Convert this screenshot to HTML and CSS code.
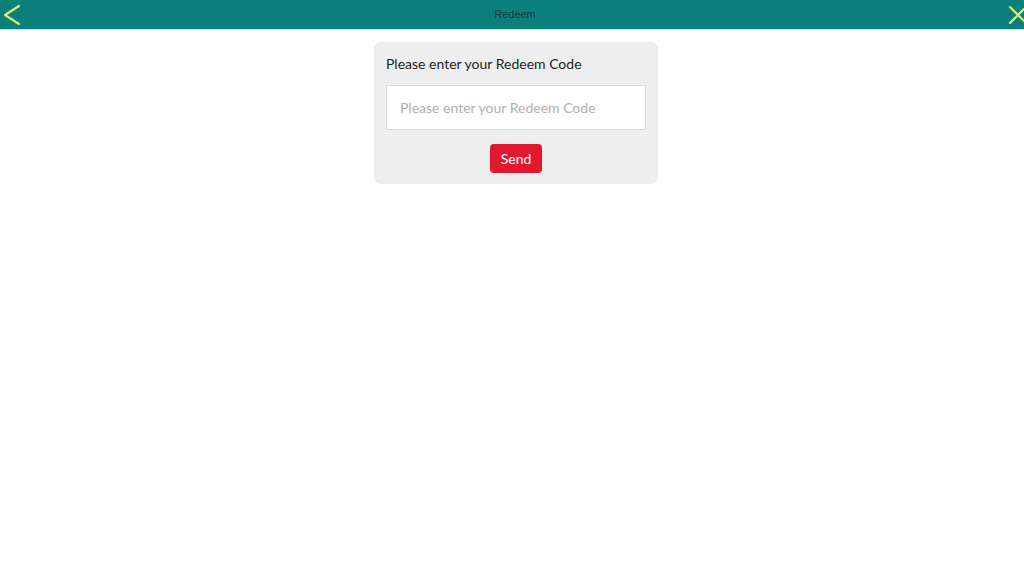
FILE: index.html
```html
<!DOCTYPE html>
<html lang="en">
<head>
<meta charset="utf-8">
<title>Redeem</title>
<link rel="stylesheet" href="styles.css">
</head>
<body>
<header class="topbar">
  <button class="icon-btn back" aria-label="Back">
    <svg width="20" height="22" viewBox="0 0 20 22"><polyline points="17,2 3,11 17,20" fill="none" stroke="#d9ef6e" stroke-width="2.2" stroke-linecap="round" stroke-linejoin="round"/></svg>
  </button>
  <div class="title">Redeem</div>
  <button class="icon-btn close" aria-label="Close">
    <svg width="18" height="20" viewBox="0 0 18 20"><path d="M2 2 L18 18 M18 2 L2 18" fill="none" stroke="#d9ef6e" stroke-width="2.2" stroke-linecap="round"/></svg>
  </button>
</header>
<main class="content">
  <section class="card">
    <label class="label" for="code">Please enter your Redeem Code</label>
    <input id="code" class="code-input" type="text" placeholder="Please enter your Redeem Code">
    <div class="actions">
      <button class="send">Send</button>
    </div>
  </section>
</main>
</body>
</html>
```

FILE: styles.css
```css
* { box-sizing: border-box; }
html, body { margin: 0; padding: 0; background: #ffffff; }
body { font-family: Lato, "Noto Sans", sans-serif; width: 1024px; height: 576px; overflow: hidden; }

.topbar {
  height: 29px;
  background: #0b7f79;
  display: flex;
  align-items: center;
  justify-content: space-between;
  box-shadow: 0 1px 1px rgba(0,0,0,0.15);
}
.icon-btn {
  background: none;
  border: 0;
  padding: 0;
  height: 29px;
  display: flex;
  align-items: center;
}
.back { padding-left: 2px; width: 24px; }
.close { width: 18px; justify-content: flex-end; }
.close svg { margin-right: -2px; }
.title {
  flex: 1;
  text-align: center;
  font-family: "Liberation Sans", Arial, sans-serif;
  font-size: 11px;
  color: #143c46;
  padding-bottom: 1px;
}

.content {
  display: flex;
  justify-content: center;
  padding-top: 14px;
  padding-left: 8px;
}
.card {
  width: 282px;
  background: #efefef;
  border-radius: 6px;
  box-shadow: 0 0 2px rgba(0,0,0,0.25);
  padding: 12px 11px 10px 11px;
  display: flex;
  flex-direction: column;
}
.label {
  font-size: 14px;
  color: #222;
  line-height: 18px;
}
.code-input {
  margin-top: 12px;
  height: 45px;
  width: 100%;
  border: 1px solid #dcdcdc;
  background: #fff;
  padding: 0 13px;
  font-family: Lato, "Noto Sans", sans-serif;
  font-size: 14px;
  color: #333;
  outline: none;
}
.code-input::placeholder { color: #b0b0b0; }
.actions {
  display: flex;
  justify-content: center;
  margin-top: 14px;
}
.send {
  width: 52px;
  height: 29px;
  border: 0;
  border-radius: 4px;
  background: #e2192e;
  color: #fff;
  font-family: Lato, "Noto Sans", sans-serif;
  font-size: 14px;
  padding: 0;
}
```
